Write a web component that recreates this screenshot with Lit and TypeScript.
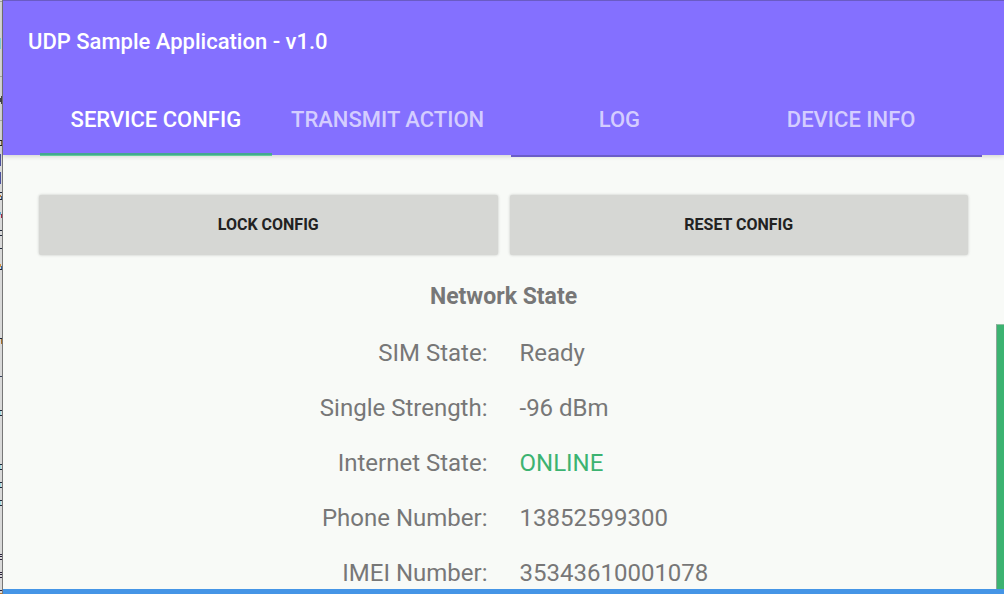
import { LitElement, html, css, svg } from "lit";
import { customElement, state } from "lit/decorators.js";

interface Row {
  label: string;
  value: string;
  online?: boolean;
}

const TABS = ["Service Config", "Transmit Action", "Log", "Device Info"];

const ROWS: Row[] = [
  { label: "SIM State:", value: "Ready" },
  { label: "Single Strength:", value: "-96 dBm" },
  { label: "Internet State:", value: "ONLINE", online: true },
  { label: "Phone Number:", value: "13852599300" },
  { label: "IMEI Number:", value: "35343610001078" },
];

// Marks of the window behind, seen along the left edge: [x, y, width, height, colour]
const MARKS: [number, number, number, number, string][] = [
  [0, 1, 2, 1, "#a0a0a0"],
  [0, 38, 1, 11, "#86cfdd"],
  [0, 76, 2, 1, "#a8a8a8"],
  [1, 96, 2, 8, "#444444"],
  [0, 98, 1, 4, "#444444"],
  [0, 120, 2, 1, "#a8a8a8"],
  [0, 140, 2, 1, "#222222"],
  [1, 141, 1, 4, "#8a6a40"],
  [0, 145, 2, 1, "#222222"],
  [0, 154, 1, 12, "#4a4f9c"],
  [0, 172, 1, 12, "#4a4f9c"],
  [0, 192, 2, 1, "#1c2638"],
  [0, 195, 1, 2, "#c07a30"],
  [1, 196, 1, 3, "#3a5a8a"],
  [0, 199, 2, 1, "#1c2638"],
  [0, 212, 1, 3, "#60a8d0"],
  [1, 214, 1, 4, "#a02848"],
  [0, 230, 2, 1, "#1c2638"],
  [0, 235, 2, 1, "#1c2638"],
  [0, 248, 2, 1, "#1c2638"],
  [0, 264, 1, 3, "#d09040"],
  [1, 266, 1, 3, "#3060a0"],
  [0, 269, 2, 1, "#1c2638"],
  [0, 338, 2, 1, "#1c2638"],
  [1, 339, 1, 5, "#a87028"],
  [0, 376, 2, 1, "#34405a"],
  [0, 410, 2, 1, "#1c2638"],
  [0, 411, 1, 4, "#9edbe2"],
  [0, 415, 2, 1, "#1c2638"],
  [0, 464, 2, 1, "#1c2638"],
  [0, 465, 1, 4, "#9edbe2"],
  [0, 469, 2, 1, "#1c2638"],
  [0, 482, 2, 1, "#1c2638"],
  [0, 483, 1, 4, "#9edbe2"],
  [0, 487, 2, 1, "#1c2638"],
  [0, 500, 2, 1, "#1c2638"],
  [0, 501, 1, 4, "#9edbe2"],
  [0, 505, 2, 1, "#1c2638"],
  [0, 554, 2, 1, "#28203a"],
  [0, 556, 2, 1, "#28203a"],
  [0, 559, 2, 1, "#28203a"],
  [0, 572, 2, 1, "#28203a"],
  [0, 574, 2, 1, "#28203a"],
  [0, 577, 2, 1, "#28203a"],
  [0, 590, 2, 1, "#28203a"],
  [0, 593, 2, 1, "#c07a30"],
];

@customElement("app-root")
export class AppRoot extends LitElement {
  @state() private active = 0;

  static styles = css`
    :host {
      display: flex;
      height: 100vh;
      overflow: hidden;
      background: #f8faf7;
      color: #777777;
      font-family: Roboto, "Liberation Sans", sans-serif;
    }
    * {
      box-sizing: border-box;
    }
    .edge {
      flex: none;
      width: 3px;
      background: #d9d9d9;
      border-right: 1px solid #777777;
      overflow: hidden;
    }
    .marks {
      display: block;
      width: 2px;
      height: 594px;
    }
    .screen {
      flex: 1;
      min-width: 0;
      display: flex;
      flex-direction: column;
      border-bottom: 5px solid #4595e6;
    }
    .bar {
      flex: none;
      background: #8470ff;
      border-top: 1px solid #6a5bc4;
      color: #ffffff;
      box-shadow: 0 1px 5px rgba(0, 0, 0, 0.18);
    }
    .title {
      margin: 0;
      padding: 26px 25px;
      font-size: 22px;
      line-height: 30px;
      font-weight: 500;
    }
    .tabs {
      display: grid;
      grid-template-columns: repeat(4, 1fr);
      padding: 0 37px;
    }
    .tab {
      appearance: none;
      height: 72px;
      padding: 4px 0 0;
      border: 0;
      border-bottom: 2px solid transparent;
      background: none;
      color: rgba(255, 255, 255, 0.66);
      font: 500 22px/30px Roboto, "Liberation Sans", sans-serif;
      text-transform: uppercase;
      white-space: nowrap;
    }
    .tab.active {
      color: #ffffff;
      border-bottom-color: #44a890;
      box-shadow: 0 1px 0 #62cf98;
    }
    .body {
      flex: 1;
      min-height: 0;
      display: flex;
      overflow: hidden;
    }
    .content {
      flex: 1;
      min-width: 0;
      padding: 0 14px 0 36px;
    }
    .field {
      position: relative;
      height: 2px;
      margin-left: 50%;
      background: #6a5cc8;
    }
    .panel {
      padding: 38px 14px 0 0;
    }
    .actions {
      display: grid;
      grid-template-columns: 1fr 1fr;
      gap: 12px;
    }
    .action {
      appearance: none;
      height: 60px;
      padding: 0;
      border: 0;
      border-radius: 2px;
      background: #d6d7d4;
      color: #222222;
      box-shadow: 0 0 3px rgba(0, 0, 0, 0.22);
      font: 700 16px/20px Roboto, "Liberation Sans", sans-serif;
      text-transform: uppercase;
    }
    .heading {
      margin: 0;
      padding-top: 26px;
      font-size: 23px;
      line-height: 32px;
      font-weight: 700;
      text-align: center;
    }
    .rows {
      display: grid;
      gap: 27px;
      margin: 0;
      padding-top: 26px;
    }
    .row {
      display: grid;
      grid-template-columns: 1fr 1fr;
      gap: 32px;
      font-size: 24px;
      line-height: 28px;
    }
    .label {
      text-align: right;
    }
    .value {
      margin: 0;
    }
    .online {
      color: #3cb371;
    }
    .rail {
      flex: none;
      display: flex;
      flex-direction: column;
      justify-content: flex-end;
      width: 8px;
    }
    .thumb {
      height: 61%;
      background: #3cb371;
      border-left: 1px solid #8fa598;
      border-top: 1px solid #8fc0a2;
    }
  `;

  render() {
    return html`
      <div class="edge" aria-hidden="true">
        <svg class="marks" viewBox="0 0 2 594" shape-rendering="crispEdges">
          ${MARKS.map(
            ([x, y, w, h, fill]) =>
              svg`<rect x=${x} y=${y} width=${w} height=${h} fill=${fill}></rect>`
          )}
        </svg>
      </div>
      <div class="screen">
        <header class="bar">
          <h1 class="title">UDP Sample Application - v1.0</h1>
          <nav class="tabs" role="tablist">
            ${TABS.map(
              (name, i) => html`<button
                class="tab ${i === this.active ? "active" : ""}"
                role="tab"
                aria-selected=${i === this.active}
                @click=${() => (this.active = i)}
              >${name}</button>`
            )}
          </nav>
        </header>
        <div class="body">
          <main class="content">
            <div class="field"></div>
            <div class="panel">
              <div class="actions">
                <button class="action">Lock Config</button>
                <button class="action">Reset Config</button>
              </div>
              <h2 class="heading">Network State</h2>
              <dl class="rows">
                ${ROWS.map(
                  (r) => html`<div class="row">
                    <dt class="label">${r.label}</dt>
                    <dd class="value ${r.online ? "online" : ""}">${r.value}</dd>
                  </div>`
                )}
              </dl>
            </div>
          </main>
          <div class="rail"><div class="thumb"></div></div>
        </div>
      </div>
    `;
  }
}
